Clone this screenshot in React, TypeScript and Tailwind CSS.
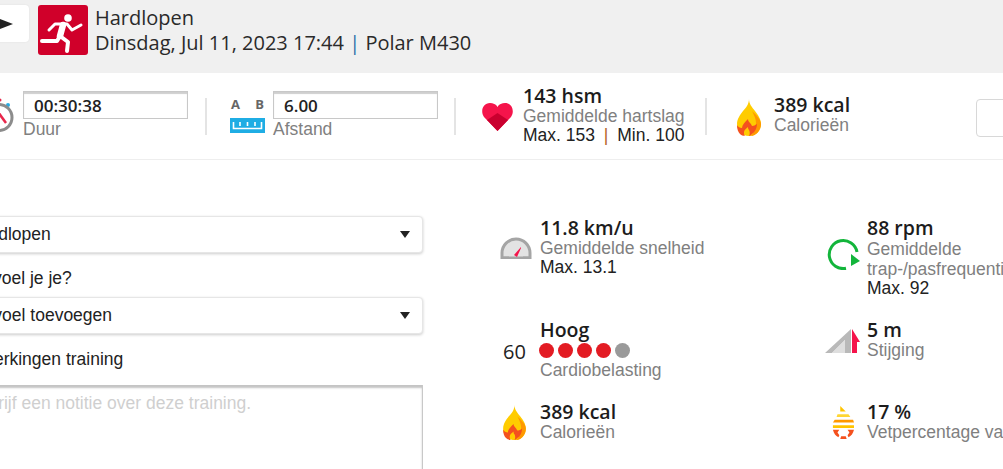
import type { ReactNode } from 'react';

const OPEN = "font-['Open_Sans',sans-serif]";
const ARIAL = "font-['Liberation_Sans',Arial,sans-serif]";

function Flame({ className }: { className?: string }) {
  return (
    <svg viewBox="0 0 24 37" className={className}>
      <path d="M12 0c0 5 3 8 6 12 3 4 6 8 6 13 0 7-5 12-12 12S0 32 0 25c0-5 3-9 6-13 3-3 6-7 6-12z" fill="#ffcc00" />
      <path d="M15 12c3 3 9 8 9 13 0 6-5 12-10 12 3-3 5-8 5-13 0-4-2-8-4-12z" fill="#ff9800" />
      <path d="M3 35c-2-2-3-5-3-9 1 2 3 3 5 3 0-3 3-6 6-9 0 3 3 4 4 7 2 0 3-1 5-2 0 4-2 8-5 10-1 1-2 2-3 2 1-2 1-4 0-6-1-1-1-2-1-3-2 2-4 3-4 5 0 2 0 3 1 4-2 0-4-1-5-2z" fill="#f4511e" />
    </svg>
  );
}

function Runner() {
  return (
    <svg viewBox="0 0 50 50" className="w-[50px] h-[50px] rounded-[3px] bg-[#d0002a] shrink-0">
      <circle cx="30" cy="13" r="3.800" fill="#fff" />
      <g fill="none" stroke="#fff" strokeLinecap="round" strokeLinejoin="round">
        <path d="M11 25l6-6h12l5 6 9-5" strokeWidth="3" />
        <path d="M25 20l-3 11" strokeWidth="6.500" />
        <path d="M22 31l-3 5H4" strokeWidth="4" />
        <path d="M22 31l8 6-1 9" strokeWidth="4" />
      </g>
    </svg>
  );
}

function Stopwatch() {
  return (
    <svg viewBox="0 0 30 40" className="w-[30px] h-[40px] shrink-0">
      <circle cx="15" cy="3" r="1.500" fill="#e8274b" />
      <circle cx="23" cy="8" r="2" fill="#29abe2" />
      <circle cx="14" cy="20.500" r="13" fill="none" stroke="#8c8c8c" strokeWidth="3" />
      <path d="M13 15l8 11" stroke="#e8274b" strokeWidth="2.500" />
    </svg>
  );
}

function Ruler() {
  return (
    <div className="w-[35px] shrink-0">
      <div className={`flex justify-between px-px text-[13px] leading-[14px] font-bold text-[#666] ${OPEN}`}>
        <span>A</span>
        <span>B</span>
      </div>
      <svg viewBox="0 0 35 15" className="w-[35px] h-[15px] mt-[7px] block">
        <rect width="35" height="15" fill="#1fade4" />
        <path d="M3.500 4v6.500h28V4M10 4v4M17.500 4v4M25 4v4" fill="none" stroke="#fff" strokeWidth="1.600" />
      </svg>
    </div>
  );
}

function Heart() {
  return (
    <svg viewBox="0 0 31 29" className="w-[31px] h-[29px] shrink-0">
      <path d="M15.500 29L2 15C-2 9 1 1 8 1c3 0 6 1 7.500 4C17 2 20 1 23 1c7 0 10 8 6 14z" fill="#f5144b" />
      <path d="M15.500 29L5 18l10.500-7L26 18z" fill="#c9002f" />
    </svg>
  );
}

function Gauge() {
  return (
    <svg viewBox="0 0 32 22" className="w-[32px] h-[22px]">
      <path d="M2 21v-5a14 14 0 0 1 28 0v5z" fill="#e3e3e3" stroke="#a5a5a5" strokeWidth="3" />
      <path d="M2 21h7M23 21h7" stroke="#a5a5a5" strokeWidth="3" />
      <path d="M14 18l7-8 0 1-4 9z" fill="#f5144b" />
    </svg>
  );
}

function Cycle() {
  return (
    <svg viewBox="0 0 34 32" className="w-[34px] h-[32px]">
      <path d="M19 30.300A14 14 0 1 1 30 14" fill="none" stroke="#13b53b" strokeWidth="3" />
      <path d="M24 28l0-12 9 7z" fill="#13b53b" />
    </svg>
  );
}

function Ascent() {
  return (
    <svg viewBox="0 0 36 24" className="w-[36px] h-[24px]">
      <path d="M0 24L26 0v24h-6V11L7 24z" fill="#b9b9b9" />
      <path d="M7 24l13-13v13z" fill="#dedede" />
      <path d="M27 0l8 13h-3v11h-5z" fill="#f5144b" />
    </svg>
  );
}

function FatDrop() {
  return (
    <svg viewBox="0 0 24 36" className="w-[22px] h-[35px]">
      <path d="M9 0l6 6H9z" fill="#ffc400" />
      <path d="M6 9h12l2 3H5z" fill="#ffd633" />
      <path d="M3 15h20l1 3H1z" fill="#ff9800" />
      <path d="M1 21h23v3H1z" fill="#ffc400" />
      <path d="M1 26h7l-2 3 2 3-1 2c-3-1-5-4-6-8zM24 26h-7l2 3-2 3 1 2c3-1 5-4 6-8zM10 33h5l1 3H9z" fill="#f4511e" />
    </svg>
  );
}

function InputStat({ icon, value, label }: { icon: ReactNode; value: string; label: string }) {
  return (
    <div className="flex items-start gap-[8px]">
      {icon}
      <div>
        <div className={`w-[165px] h-[28px] border border-[#c8c8c8] shadow-[inset_0_2px_1px_#cfcfcf] pl-[10px] pt-[2px] text-[17px] leading-[24px] font-semibold text-[#222] ${OPEN}`}>
          {value}
        </div>
        <div className={`mt-[1px] text-[17.5px] leading-[19px] text-[#808080] ${ARIAL}`}>{label}</div>
      </div>
    </div>
  );
}

function Sep() {
  return <div className="w-[2px] h-[37px] bg-[#e4e4e4] shrink-0" />;
}

function Metric({ value, label, extra }: { value: string; label: ReactNode; extra?: ReactNode }) {
  return (
    <div className="min-w-0">
      <div className={`text-[19.5px] leading-[22px] font-semibold text-[#1c1c1c] whitespace-nowrap ${OPEN}`}>{value}</div>
      <div className={`text-[17.5px] leading-[19px] text-[#808080] whitespace-nowrap ${ARIAL}`}>{label}</div>
      {extra && <div className={`text-[17.5px] leading-[19px] text-[#222] whitespace-nowrap ${ARIAL}`}>{extra}</div>}
    </div>
  );
}

function FakeSelect({ text }: { text: string }) {
  return (
    <div className={`h-[37px] w-[467px] flex items-center justify-between pl-[13px] pr-[12px] bg-white border border-[#e6e6e6] rounded-[4px] shadow-[0_1px_3px_rgba(0,0,0,0.2)] text-[17.5px] text-[#222] ${ARIAL}`}>
      <span>{text}</span>
      <span className="w-0 h-0 border-x-[5px] border-x-transparent border-t-[7px] border-t-[#222]" />
    </div>
  );
}

export default function App() {
  return (
    <div className="w-[1003px] h-[469px] overflow-hidden bg-white">
      {/* page is scrolled sideways in the shot, hence the negative margin */}
      <div className="w-[1100px] -ml-[44px]">
        <div className="h-[73px] bg-[#f0f0f0] flex items-start pt-[5px] pl-[16px]">
          <div className="w-[57px] h-[37px] bg-white rounded-[4px] shadow-[0_0_2px_rgba(0,0,0,0.08)] flex items-center justify-end pr-[16px]">
            <span className="w-0 h-0 border-y-[5px] border-y-transparent border-l-[13px] border-l-[#222]" />
          </div>
          <div className="ml-[9px]">
            <Runner />
          </div>
          <div className={`ml-[7px] text-[20px] leading-[25px] text-[#2a2a2a] ${OPEN}`}>
            <div>Hardlopen</div>
            <div>
              Dinsdag, Jul 11, 2023 17:44 <span className="text-[#2a6fa8]">|</span> Polar M430
            </div>
          </div>
        </div>

        <div className="h-[87px] border-b border-[#eeeeee] flex items-start pl-[29px]">
          <div className="pt-[18px] shrink-0">
            <InputStat icon={<div className="mt-[6px]"><Stopwatch /></div>} value="00:30:38" label="Duur" />
          </div>
          <div className="ml-[17px] mt-[25px]"><Sep /></div>
          <div className="ml-[23px] pt-[18px] shrink-0">
            <InputStat icon={<div className="mt-[6px]"><Ruler /></div>} value="6.00" label="Afstand" />
          </div>
          <div className="ml-[16px] mt-[25px]"><Sep /></div>
          <div className="ml-[26px] mt-[29px]"><Heart /></div>
          <div className="ml-[10px] pt-[12px] w-[173px]">
            <Metric
              value="143 hsm"
              label="Gemiddelde hartslag"
              extra={<>Max. 153 <span className="text-[#b5651d] mx-[4px]">|</span> Min. 100</>}
            />
          </div>
          <div className="ml-[9px] mt-[25px]"><Sep /></div>
          <Flame className="ml-[30px] mt-[26px] w-[24px] h-[37px] shrink-0" />
          <div className="ml-[13px] pt-[21px] w-[150px]">
            <Metric value="389 kcal" label="Calorieën" />
          </div>
          <div className="ml-[52px] mt-[26px] w-[80px] h-[38px] border border-[#d8d8d8] rounded-[4px]" />
        </div>

        <div className="flex items-start">
          <div className="w-[467px] shrink-0 pt-[56px]">
            <FakeSelect text="Hardlopen" />
            <div className={`mt-[15px] mb-[9px] text-[17.5px] leading-[20px] text-[#222] ${ARIAL}`}>Hoe voel je je?</div>
            <FakeSelect text="Gevoel toevoegen" />
            <div className={`mt-[15px] text-[17.5px] leading-[20px] text-[#222] ${ARIAL}`}>Opmerkingen training</div>
            <div className={`mt-[16px] h-[120px] border border-[#c8c8c8] border-t-0 shadow-[inset_0_3px_2px_#c4c4c4] pl-[11px] pt-[8px] text-[17.5px] leading-[20px] text-[#cfcfcf] ${ARIAL}`}>
              Schrijf een notitie over deze training.
            </div>
          </div>

          <div className="ml-[77px] mt-[57px] grid grid-cols-[327px_200px] grid-rows-[102px_82px_70px]">
            <div className="flex items-start">
              <div className="w-[40px] shrink-0 pt-[20px]"><Gauge /></div>
              <Metric value="11.8 km/u" label="Gemiddelde snelheid" extra="Max. 13.1" />
            </div>
            <div className="flex items-start">
              <div className="w-[40px] shrink-0 pt-[21px]"><Cycle /></div>
              <Metric
                value="88 rpm"
                label={<span className="block leading-[20px]">Gemiddelde<br />trap-/pasfrequentie</span>}
                extra="Max. 92"
              />
            </div>

            <div className="flex items-start">
              <div className={`w-[40px] shrink-0 pt-[21px] pl-[3px] text-[20px] leading-[24px] font-medium text-[#222] ${OPEN}`}>60</div>
              <div>
                <div className={`text-[19.5px] leading-[22px] font-semibold text-[#1c1c1c] ${OPEN}`}>Hoog</div>
                <div className="-ml-[1px] flex gap-[4px] h-[19px] items-center">
                  <span className="w-[15px] h-[15px] rounded-full bg-[#e31b23]" />
                  <span className="w-[15px] h-[15px] rounded-full bg-[#e31b23]" />
                  <span className="w-[15px] h-[15px] rounded-full bg-[#e31b23]" />
                  <span className="w-[15px] h-[15px] rounded-full bg-[#e31b23]" />
                  <span className="w-[15px] h-[15px] rounded-full bg-[#9a9a9a]" />
                </div>
                <div className={`text-[17.5px] leading-[21px] text-[#808080] ${ARIAL}`}>Cardiobelasting</div>
              </div>
            </div>
            <div className="flex items-start">
              <div className="w-[40px] shrink-0 pt-[10px] -ml-[2px] mr-[2px]"><Ascent /></div>
              <Metric value="5 m" label="Stijging" />
            </div>

            <div className="flex items-start">
              <div className="w-[40px] shrink-0 pt-[4px] pl-[3px]"><Flame className="w-[23px] h-[35px]" /></div>
              <Metric value="389 kcal" label="Calorieën" />
            </div>
            <div className="flex items-start">
              <div className="w-[40px] shrink-0 pt-[4px] pl-[5px]"><FatDrop /></div>
              <Metric value="17 %" label="Vetpercentage van calorieën" />
            </div>
          </div>
        </div>
      </div>
    </div>
  );
}
